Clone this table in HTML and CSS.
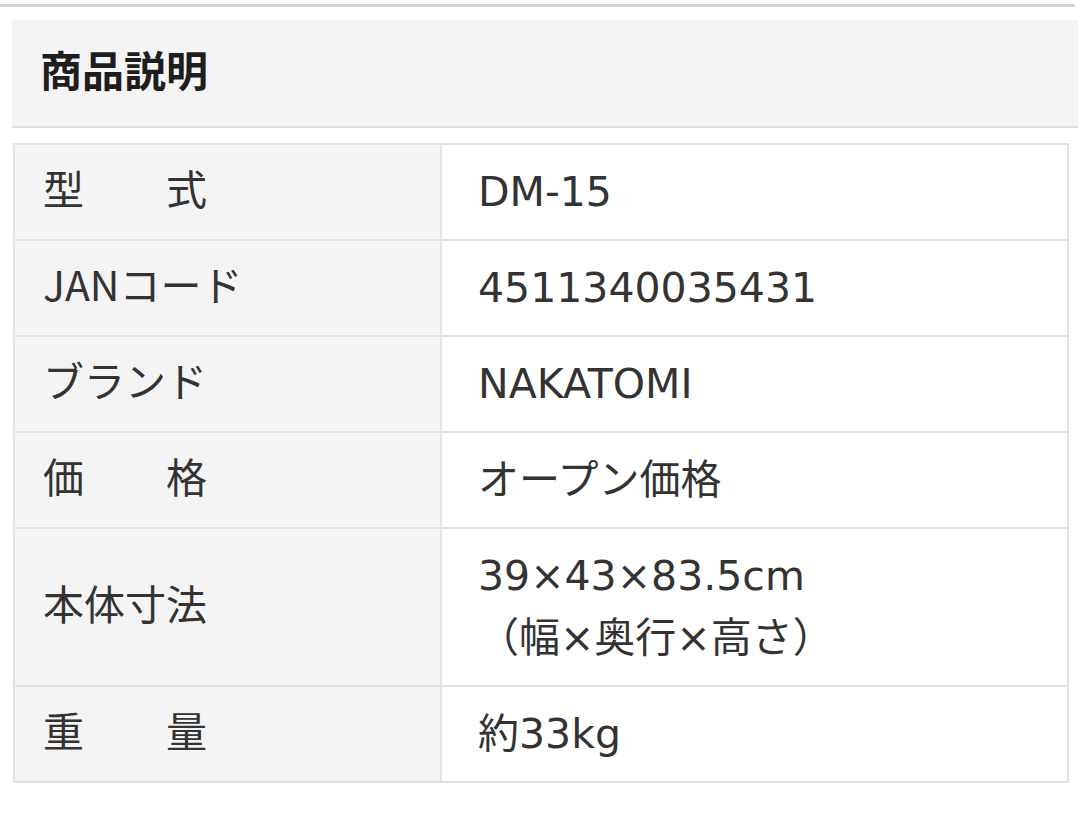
FILE: index.html
```html
<!DOCTYPE html>
<html lang="ja">
<head>
<meta charset="utf-8">
<link rel="stylesheet" href="styles.css">
</head>
<body>
<div class="topline"></div>
<div class="heading"><h2>商品説明</h2></div>
<table class="spec">
<tr><th>型　　式</th><td>DM-15</td></tr>
<tr><th>JANコード</th><td>4511340035431</td></tr>
<tr><th>ブランド</th><td>NAKATOMI</td></tr>
<tr><th>価　　格</th><td>オープン価格</td></tr>
<tr><th>本体寸法</th><td>39×43×83.5cm<br>（幅×奥行×高さ）</td></tr>
<tr><th>重　　量</th><td>約33kg</td></tr>
</table>
</body>
</html>
```
FILE: styles.css
```css
html, body {
  margin: 0;
  padding: 0;
  background: #fff;
}
body {
  font-family: "DejaVu Sans", "Noto Sans CJK JP", sans-serif;
  color: #333;
  width: 1080px;
  height: 824px;
  overflow: hidden;
}
.topline {
  margin-top: 4px;
  margin-right: 5px;
  height: 3px;
  background: #d4d4d4;
}
.heading {
  margin: 13px 2px 0 12px;
  height: 108px;
  background: #f4f4f4;
  border-bottom: 2px solid #dedede;
  display: flex;
  align-items: center;
  padding-left: 28px;
  padding-bottom: 8px;
  box-sizing: border-box;
}
.heading h2 {
  margin: 0;
  font-family: "Noto Sans CJK JP", sans-serif;
  font-weight: 700;
  font-size: 42px;
  color: #1e1e1e;
  line-height: 1;
}
.spec {
  margin: 15px 0 0 13px;
  width: 1056px;
  border-collapse: collapse;
  font-size: 41px;
}
.spec th, .spec td {
  border: 2px solid #e2e2e2;
  height: 94px;
  line-height: 62px;
  padding: 16px 0;
  text-align: left;
  vertical-align: middle;
  font-weight: 400;
  box-sizing: border-box;
}
.spec th {
  width: 427px;
  background: #f4f4f4;
  padding-left: 28px;
  padding-top: 11px;
  padding-bottom: 21px;
  font-family: "Noto Sans CJK JP", sans-serif;
}
.spec td {
  background: #fff;
  padding-left: 36px;
}
```
